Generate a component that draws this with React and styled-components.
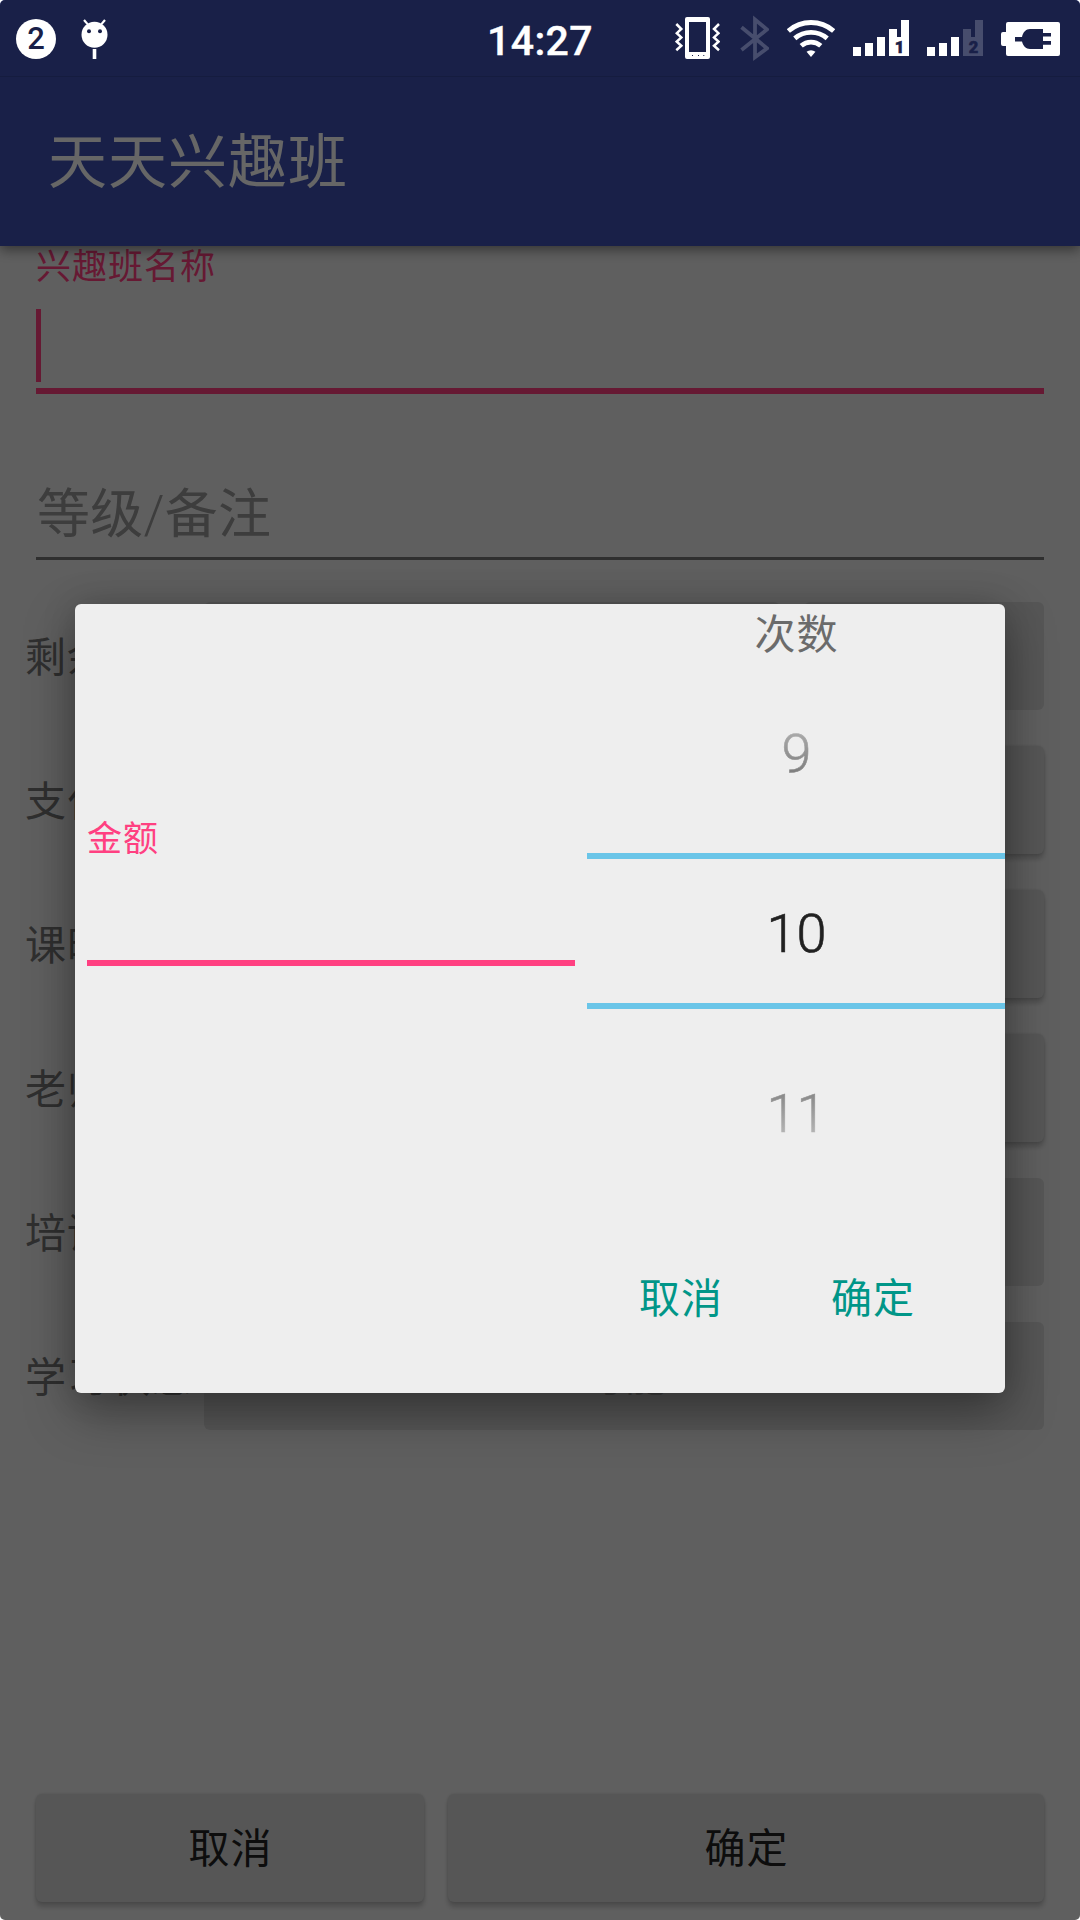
import React from "react";
import styled, { createGlobalStyle, css } from "styled-components";

const NAVY = "#192048";
const DIM = "#474d6d";

const GlobalStyle = createGlobalStyle`
  * { box-sizing: border-box; }
  body { margin: 0; background: #fff; }
  button { border: 0; margin: 0; padding: 0; font: inherit; letter-spacing: inherit; }
`;

const Screen = styled.div`
  position: relative;
  width: 1080px;
  height: 1920px;
  display: flex;
  flex-direction: column;
  overflow: hidden;
  border-radius: 5px;
  background: #eeeeee;
  font-family: Roboto, "Noto Sans CJK SC", sans-serif;
  font-size: 41px;
  letter-spacing: 1px;
  line-height: 1;
`;

/* ---------- status bar ---------- */

const StatusBar = styled.header`
  position: absolute;
  inset: 0 0 auto 0;
  z-index: 3;
  height: 77px;
  display: grid;
  grid-template-columns: 1fr auto 1fr;
  color: #fff;
  letter-spacing: 0;
  border-bottom: 1px solid rgba(0, 0, 0, 0.12);
`;

const StatusGroup = styled.div`
  display: flex;
  gap: ${(p) => p.$gap}px;
  padding: 0 20px 0 16px;
  justify-content: ${(p) => (p.$end ? "flex-end" : "flex-start")};
`;

const Clock = styled.time`
  font-size: 41px;
  font-weight: 500;
  line-height: 40px;
  padding-top: 21px;
  letter-spacing: 0.4px;
  -webkit-text-stroke: 0.4px #fff;
`;

const Badge = styled.span`
  width: 40px;
  height: 40px;
  margin-top: 19px;
  border-radius: 50%;
  background: #fff;
  color: ${NAVY};
  font-size: 31px;
  font-weight: 500;
  line-height: 40px;
  text-align: center;
`;

const Glyph = ({ x, w, children }) => (
  <svg width={w} height="76" viewBox={`${x} 0 ${w} 76`} fill="#fff">
    {children}
  </svg>
);

const AndroidIcon = () => (
  <Glyph x={80} w={30}>
    <circle cx="94.5" cy="34.7" r="13" />
    <path d="M84 20l4 4.600M105 20l-4 4.600" stroke="#fff" strokeWidth="2.200" />
    <circle cx="89" cy="31.200" r="2" fill={NAVY} />
    <circle cx="100" cy="31.200" r="2" fill={NAVY} />
    <rect x="92.700" y="49" width="3.600" height="10" />
  </Glyph>
);

const VibrateIcon = () => (
  <Glyph x={675} w={45}>
    <path
      fillRule="evenodd"
      d="M687 17h21a2 2 0 0 1 2 2v38a2 2 0 0 1-2 2h-21a2 2 0 0 1-2-2V19a2 2 0 0 1 2-2zM689 22v30h17V22z"
    />
    <path
      d="M676.3 24l5 5-4.500 4.200 4.500 4.200-4.500 4.200 4.500 4.200-5 4.400M719 24l-5 5 4.500 4.200-4.500 4.200 4.500 4.200-4.500 4.200 5 4.400"
      fill="none"
      stroke="#fff"
      strokeWidth="2.500"
    />
    <path d="M692 55.500h1M698 55.500h1M703.300 55.500h1" stroke={NAVY} strokeWidth="1" />
  </Glyph>
);

const BluetoothIcon = () => (
  <Glyph x={738} w={31}>
    <path
      d="M741.500 27.300l25.500 21-12 9V19.500l12 10-25.500 20.500"
      fill="none"
      stroke={DIM}
      strokeWidth="3.800"
    />
  </Glyph>
);

const arc = (r) => {
  const a = (41 * Math.PI) / 180;
  const dx = r * Math.sin(a);
  const y = 57 - r * Math.cos(a);
  return `M${811 - dx} ${y}A${r} ${r} 0 0 1 ${811 + dx} ${y}`;
};

const WifiIcon = () => (
  <Glyph x={787} w={48}>
    <path d={`${arc(34.5)}${arc(24.7)}${arc(14.9)}`} fill="none" stroke="#fff" strokeWidth="4.800" />
    <path d={`${arc(6.8)}L811 57z`} />
  </Glyph>
);

const SignalIcon = ({ sim, weak }) => (
  <Glyph x={0} w={56}>
    <path d="M0 47h8v9H0zM12 43h8v13h-8zM24 37h8v19h-8z" />
    <path d="M36 29h8v8h4V20h8v36H36z" fill={weak ? DIM : "#fff"} />
    <text
      x="46.500"
      y="53.300"
      fontSize="16.500"
      fontWeight="900"
      textAnchor="middle"
      fill={NAVY}
      stroke={NAVY}
      strokeWidth="0.500"
    >
      {sim}
    </text>
  </Glyph>
);

const BatteryIcon = () => (
  <Glyph x={1001} w={59}>
    <path d="M1008 22h50a2 2 0 0 1 2 2v30a2 2 0 0 1-2 2h-50a2 2 0 0 1-2-2v-8h-3a2 2 0 0 1-2-2V34a2 2 0 0 1 2-2h3v-8a2 2 0 0 1 2-2z" />
    <path
      d="M1015 37h7c1-5 4-8 8-8h13v4h8v3.500h-8V41h8v3.700h-8V49h-13c-4 0-7-3-8-7.500h-7z"
      fill={NAVY}
    />
  </Glyph>
);

/* ---------- page behind the dialog ---------- */

const AppBar = styled.div`
  flex: none;
  position: relative;
  height: 246px;
  padding: 133px 48px 0;
  background: #3f51b5;
  color: #fff;
  font-size: 59px;
  line-height: 60px;
  box-shadow: 0 4px 12px rgba(0, 0, 0, 0.45);
  z-index: 1;
`;

const Page = styled.main`
  flex: 1;
  display: flex;
  flex-direction: column;
`;

const Field = styled.div`
  margin: 0 36px;
  display: flex;
  flex-direction: column;
`;

const FloatingLabel = styled.label`
  padding: 4px 0 0;
  font-size: 35px;
  line-height: 36px;
  color: #ff4081;
`;

const Caret = styled.i`
  width: 5px;
  height: 73px;
  margin: 23px 0 6px;
  background: #ff4081;
`;

const Underline = styled.hr`
  border: 0;
  margin: 0;
  width: 100%;
  height: ${(p) => (p.$active ? 6 : 3)}px;
  background: ${(p) => (p.$active ? "#ff4081" : "#757575")};
`;

const Hint = styled.span`
  height: 54px;
  margin: 94px 0 15px;
  padding-left: 1px;
  font-size: 53px;
  line-height: 54px;
  letter-spacing: 0.3px;
  color: #989898;
`;

const Slash = styled.span`
  font-weight: 300;
  letter-spacing: 0;
`;

const Rows = styled.section`
  display: flex;
  flex-direction: column;
  gap: 36px;
  margin: 42px 36px 0 24px;
`;

const Row = styled.div`
  display: flex;
  gap: 24px;
  height: 108px;
`;

const RowLabel = styled.span`
  width: 156px;
  padding-left: 1px;
  line-height: 112px;
  color: #757575;
  white-space: nowrap;
`;

const raised = css`
  box-shadow: 0 5px 5px rgba(0, 0, 0, 0.2), 0 0 3px rgba(0, 0, 0, 0.14);
`;

const Button = styled.button`
  flex: ${(p) => p.$basis || "1 1 0"};
  min-width: 0;
  height: 108px;
  padding: 1px 0 0 1px;
  border-radius: 6px;
  background: #d6d7d7;
  color: ${(p) => (p.$muted ? "#9a9a9a" : "#212121")};
  line-height: 109px;
  text-align: center;
  ${(p) => p.$raised && raised}
`;

const Footer = styled.footer`
  display: flex;
  gap: 24px;
  margin: auto 36px 18px;
`;

/* ---------- dialog ---------- */

const Scrim = styled.div`
  position: absolute;
  inset: 0;
  z-index: 2;
  padding-top: 77px;
  display: flex;
  align-items: center;
  justify-content: center;
  background: rgba(0, 0, 0, 0.6);
`;

const Dialog = styled.div`
  width: 930px;
  height: 789px;
  display: flex;
  flex-direction: column;
  border-radius: 6px;
  background: #eeeeee;
  box-shadow: 0 20px 50px rgba(0, 0, 0, 0.34), 0 0 34px rgba(0, 0, 0, 0.16);
`;

const DialogBody = styled.div`
  display: flex;
  gap: 12px;
  height: 616px;
`;

const Amount = styled.div`
  width: 488px;
  margin-left: 12px;
  padding-top: 214px;
  display: flex;
  flex-direction: column;
  gap: 102px;
`;

const Picker = styled.div`
  flex: 1;
  text-align: center;
`;

const PickerTitle = styled.div`
  height: 56px;
  padding: 11px 0 0 1px;
  color: #6b6b6b;
`;

const Slot = styled.div`
  height: ${(p) => p.$height}px;
  padding: ${(p) => p.$top}px 0 0 1px;
  font-size: 54px;
  line-height: 54px;
  font-weight: 300;
  letter-spacing: 0;
  color: #212121;
  -webkit-text-stroke-width: 0.6px;
`;

const SelectedSlot = styled(Slot)`
  border: solid #6ac5e8;
  border-width: 6px 0;
`;

const Fade = styled.span`
  display: inline-block;
  color: transparent;
  background: linear-gradient(${(p) => p.$from}, ${(p) => p.$to});
  background-clip: text;
  -webkit-background-clip: text;
`;

const Actions = styled.div`
  display: flex;
  justify-content: flex-end;
  gap: 108px;
  padding: 58px 90px 0 0;
`;

const TextButton = styled.button`
  background: none;
  color: #009688;
  height: 42px;
  line-height: 42px;
`;

const rows = [
  { label: "剩余次数", buttons: [{ basis: "0 0 576px" }, {}] },
  { label: "支付金额", buttons: [{ raised: true }] },
  { label: "课时时长", buttons: [{ raised: true }] },
  { label: "老师电话", buttons: [{ raised: true }] },
  { label: "培训地点", buttons: [{}] },
  { label: "学习状态", buttons: [{ text: "可能" }] },
];

export default function App() {
  return (
    <Screen>
      <GlobalStyle />
      <StatusBar>
        <StatusGroup $gap={24}>
          <Badge>2</Badge>
          <AndroidIcon />
        </StatusGroup>
        <Clock>14:27</Clock>
        <StatusGroup $gap={18} $end>
          <VibrateIcon />
          <BluetoothIcon />
          <WifiIcon />
          <SignalIcon sim="1" />
          <SignalIcon sim="2" weak />
          <BatteryIcon />
        </StatusGroup>
      </StatusBar>

      <AppBar>天天兴趣班</AppBar>
      <Page>
        <Field>
          <FloatingLabel>兴趣班名称</FloatingLabel>
          <Caret />
          <Underline $active />
        </Field>
        <Field>
          <Hint>
            等级<Slash>/</Slash>备注
          </Hint>
          <Underline />
        </Field>
        <Rows>
          {rows.map((row) => (
            <Row key={row.label}>
              <RowLabel>{row.label}</RowLabel>
              {row.buttons.map((b, i) => (
                <Button key={i} $basis={b.basis} $raised={b.raised} $muted>
                  {b.text}
                </Button>
              ))}
            </Row>
          ))}
        </Rows>
        <Footer>
          <Button $basis="0 0 388px" $raised>
            取消
          </Button>
          <Button $raised>确定</Button>
        </Footer>
      </Page>

      <Scrim>
        <Dialog>
          <DialogBody>
            <Amount>
              <FloatingLabel>金额</FloatingLabel>
              <Underline $active />
            </Amount>
            <Picker>
              <PickerTitle>次数</PickerTitle>
              <Slot $height={193} $top={67}>
                <Fade $from="#b0b0b0" $to="#757575">9</Fade>
              </Slot>
              <SelectedSlot $height={156} $top={48}>
                10
              </SelectedSlot>
              <Slot $height={193} $top={78}>
                <Fade $from="#828282" $to="#bcbcbc">11</Fade>
              </Slot>
            </Picker>
          </DialogBody>
          <Actions>
            <TextButton>取消</TextButton>
            <TextButton>确定</TextButton>
          </Actions>
        </Dialog>
      </Scrim>
    </Screen>
  );
}
